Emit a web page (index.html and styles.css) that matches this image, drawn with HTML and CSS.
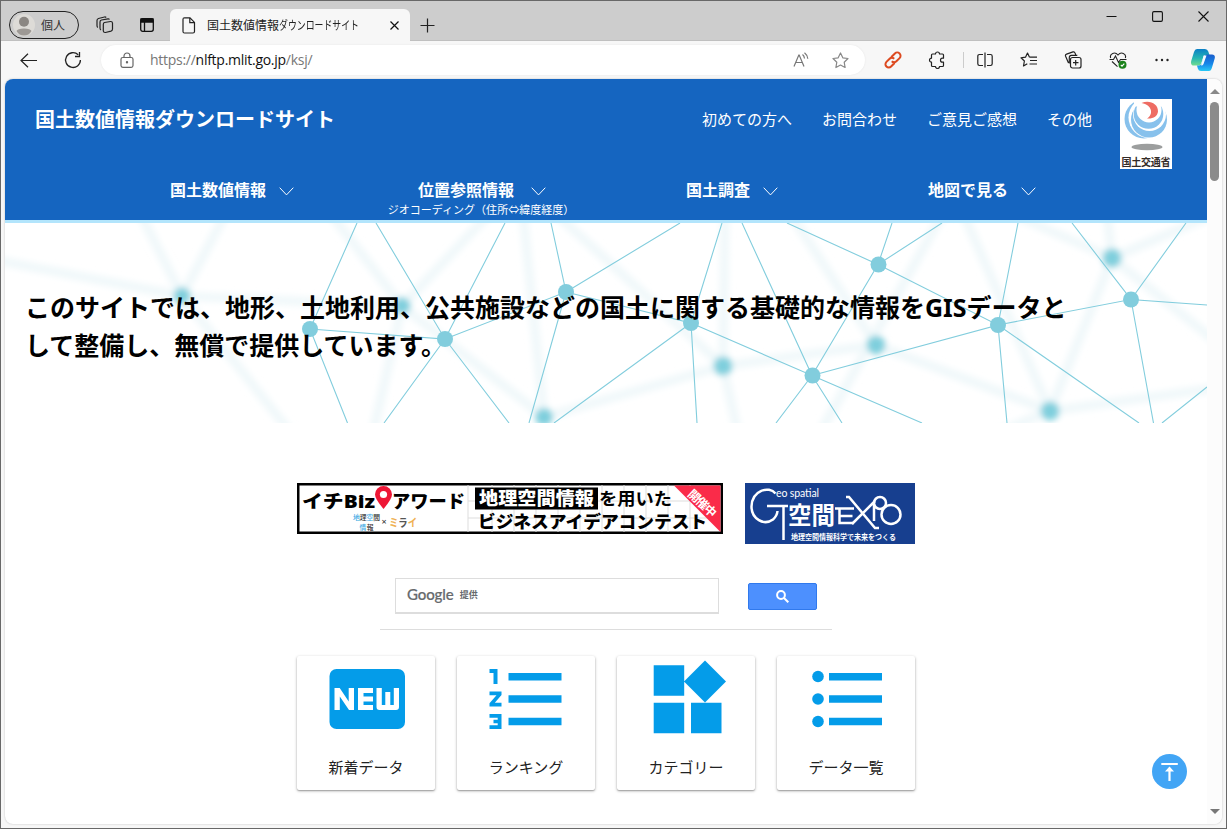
FILE: index.html
```html
<!DOCTYPE html>
<html lang="ja">
<head>
<meta charset="utf-8">
<title>国土数値情報ダウンロードサイト</title>
<link rel="stylesheet" href="styles.css">
</head>
<body>
<div class="window">
  <header class="tabbar">
    <div class="profile">
      <svg width="22" height="22" viewBox="0 0 22 22"><circle cx="11" cy="11" r="11" fill="#dddbd7"/><circle cx="11" cy="7.800" r="5" fill="#8b8783"/><path d="M3.500 17q1-2.500 7.500-2.500t7.500 2.500Q16 21.500 11 21.500T3.500 17Z" fill="#9d9995"/></svg>
      <span>個人</span>
    </div>
    <svg class="ic-work" width="18" height="18" viewBox="0 0 18 18" fill="none" stroke="#222" stroke-width="1.2"><path d="M8.500 6.500 14.500 5.500Q16.300 5.300 16.500 7V13Q16.500 14.800 15 15.200L9.500 16.500Q7.500 16.700 7.300 15V8.500Q7.300 6.800 8.500 6.500Z"/><path d="M5 14Q4 13.500 4 12V6Q4 4.300 5.500 4L12 2.800Q13 2.700 13.500 3.500"/><path d="M1.800 11.500Q1 11 1 9.500V4.500Q1 3 2.500 2.500L8.500 1Q9.500.8 10.200 1.500"/></svg>
    <svg class="ic-vtab" width="14" height="14" viewBox="0 0 14 14" fill="none" stroke="#111" stroke-width="1.3"><rect x=".7" y=".7" width="12.600" height="12.600" rx="2"/><path d="M1 1h12v3H1z" fill="#111"/><path d="M4.500 4v9"/></svg>
    <div class="tab">
      <svg width="14" height="17" viewBox="0 0 14 17" fill="none" stroke="#222" stroke-width="1.2"><path d="M2.500.8H8L12.500 5.400V14.500Q12.500 16 11 16H2.500Q1 16 1 14.500V2.300Q1 .8 2.500.8Z"/><path d="M7.800 1v4.600h4.600"/></svg>
      <span class="tab-title">国土数値情報<span class="kana">ダウンロードサイト</span></span>
      <svg class="tab-close" width="9" height="9" viewBox="0 0 9 9" stroke="#111" stroke-width="1.2"><path d="M.5.5l8 8M8.500.5l-8 8"/></svg>
    </div>
    <svg class="ic-plus" width="15" height="15" viewBox="0 0 15 15" stroke="#222" stroke-width="1.2"><path d="M7.500.5v14M.5 7.500h14"/></svg>
    <div class="winctl">
      <svg width="11" height="11" viewBox="0 0 11 11" stroke="#111"><path d="M.5 5.500h10"/></svg>
      <svg width="11" height="11" viewBox="0 0 11 11" fill="none" stroke="#111" stroke-width="1.100"><rect x=".6" y=".6" width="9.800" height="9.800" rx="1.300"/></svg>
      <svg width="11" height="11" viewBox="0 0 11 11" stroke="#111" stroke-width="1.100"><path d="M.5.5l10 10M10.500.5l-10 10"/></svg>
    </div>
  </header>

  <div class="toolbar">
    <svg class="ic-back" width="18" height="15" viewBox="0 0 18 15" fill="none" stroke="#222" stroke-width="1.2"><path d="M1 7.500h16M8 .7 1 7.500l7 6.800"/></svg>
    <svg class="ic-reload" width="18" height="18" viewBox="0 0 18 18" fill="none" stroke="#222" stroke-width="1.300"><path d="M16.400 9A7.400 7.400 0 1 1 14.200 3.800M15.500 1v4.500H11"/></svg>
    <div class="address">
      <svg width="14" height="16" viewBox="0 0 14 16" fill="none" stroke="#666" stroke-width="1.200"><rect x="1" y="5.500" width="12" height="9.800" rx="1.800"/><path d="M4 5.500V4a3 3 0 0 1 6 0v1.500"/><circle cx="7" cy="10.300" r=".6" fill="#555"/></svg>
      <span class="url">https://<b>nlftp.mlit.go.jp</b>/ksj/</span>
      <svg class="ic-read" width="16" height="16" viewBox="0 0 16 16" fill="none" stroke="#777" stroke-width="1.200"><path d="M1 14.500 5.800 3h.4L11 14.500M2.700 10.500h6.600M9.500 2.500q1.700 1.200 2 4M11.500.8q2.900 2.200 3.300 6"/></svg>
      <svg class="ic-star" width="17" height="17" viewBox="0 0 17 17" fill="none" stroke="#888" stroke-width="1.200" stroke-linejoin="round"><path d="m8.500 1 2.300 4.800 5.200.7-3.800 3.700.9 5.300-4.600-2.500-4.600 2.500.9-5.300L1 6.500l5.200-.7Z"/></svg>
    </div>
    <div class="tools">
      <svg width="18" height="18" viewBox="0 0 18 18" fill="none" stroke="#dd4a20" stroke-width="2"><g transform="rotate(-45 9 9)"><path d="M8 12.300H3A3.300 3.300 0 0 1 3 5.700H7.500A3.300 3.300 0 0 1 10.700 9M10 5.700H15A3.300 3.300 0 0 1 15 12.300H10.500A3.300 3.300 0 0 1 7.300 9"/></g></svg>
      <svg width="18" height="18" viewBox="0 0 18 18" fill="none" stroke="#222" stroke-width="1.200" stroke-linejoin="round"><path d="M4.500 3h3a2 2 0 0 1 4 0h3q1 0 1 1v3.200h-1a2 2 0 0 0 0 4h1V14.500q0 1-1 1h-3a2 2 0 0 1-4 0h-3q-1 0-1-1v-3.300a2 2 0 0 1 0-4V4q0-1 1-1Z"/></svg>
      <i class="sep"></i>
      <svg width="18" height="18" viewBox="0 0 18 18" fill="none" stroke="#222" stroke-width="1.200"><path d="M7 3.500H3.500q-1.700 0-1.700 1.700v7.600q0 1.700 1.700 1.700H7M11 3.500h3.500q1.700 0 1.700 1.700v7.600q0 1.700-1.700 1.700H11M9 1.500v15"/></svg>
      <svg width="18" height="18" viewBox="0 0 18 18" fill="none" stroke="#222" stroke-width="1.200" stroke-linejoin="round"><path d="M9.500 6.200 7.500 2 5.500 6.200 1 6.800 4.400 10l-.9 5 3.800-2.200M9.500 6.200H17M10 9.500h7M9.500 13H17"/></svg>
      <svg width="18" height="18" viewBox="0 0 18 18" fill="none" stroke="#222" stroke-width="1.200"><rect x="6.500" y="6.500" width="10.500" height="10.500" rx="2"/><path d="M11.700 9v5.500M9 11.700h5.500M4.500 12 1.600 5.300Q1 3.700 2.600 3.100L9 .9q1.500-.5 2 1l.8 2.200M5.300 12.500V6.500q0-2.200 2-2.200h6"/></svg>
      <svg width="18" height="18" viewBox="0 0 18 18" fill="none" stroke="#222" stroke-width="1.100"><path d="M1.700 7C.2 2.500 6 .2 9 4c3-3.800 8.800-1.500 7.300 3M3 10.500 8.500 15.700M.5 8.500h4L6.500 5l3 6.500 2-3h6"/><circle cx="13.500" cy="13.800" r="4" fill="#1a821a" stroke="none"/><path d="m11.800 13.800 1.200 1.300 2.300-2.500" stroke="#fff"/></svg>
      <svg width="18" height="18" viewBox="0 0 18 18" fill="#222"><circle cx="3.500" cy="9" r="1.200"/><circle cx="9" cy="9" r="1.200"/><circle cx="14.500" cy="9" r="1.200"/></svg>
      <svg class="copilot" width="24" height="22" viewBox="0 0 24 22"><defs><linearGradient id="c1" x1="0" y1="0" x2="0" y2="1"><stop stop-color="#0b7fc6"/><stop offset=".55" stop-color="#24b5b3"/><stop offset="1" stop-color="#71dc90"/></linearGradient><linearGradient id="c2" x1="0" y1="0" x2="0" y2="1"><stop stop-color="#1b5ecb"/><stop offset=".55" stop-color="#1685e8"/><stop offset="1" stop-color="#27c8f5"/></linearGradient></defs><path d="M6 0h8q2.500 0 3.300 2.500L18.500 6H15q-2 0-2.600 2l-2 6q-.7 2.500-3 2.500H3Q-.8 16.500.2 12L3 3Q3.800 0 6 0Z" fill="url(#c1)"/><path d="M18 22h-8Q7.500 22 6.800 19.500L6 16.500h2q2 0 2.600-2l2.200-6.500q.8-2.500 3-2.500H21q3.600 0 2.700 4L21 18.500Q20 22 18 22Z" fill="url(#c2)"/><path d="M12.600 6.500H15.500L12.500 15q-.6 1.500-2.500 1.500Z" fill="#f4fbff"/></svg>
    </div>
  </div>

  <div class="viewport">
    <main class="page">
      <div class="site-head">
        <div class="head-top">
          <h1>国土数値情報ダウンロードサイト</h1>
          <nav class="links"><a>初めての方へ</a><a>お問合わせ</a><a>ご意見ご感想</a><a>その他</a></nav>
          <svg class="mlit" width="52" height="70" viewBox="0 0 52 70">
            <rect width="52" height="70" fill="#fff"/>
            <circle cx="24" cy="20" r="19.500" fill="#87c1ec"/>
            <circle cx="29" cy="18.500" r="20.500" fill="#fff"/>
            <circle cx="29" cy="20.500" r="18" fill="#87c1ec"/>
            <circle cx="29.500" cy="15.500" r="16.500" fill="#fff"/>
            <circle cx="28.500" cy="15" r="14.800" fill="#87c1ec"/>
            <circle cx="29" cy="11" r="12.500" fill="#fff"/>
            <path d="M14 0H52V7.500H14Z" fill="#fff"/>
            <path d="M21.500 4C29 .5 38.500 4.500 38 12.500 37.500 17.500 33 20 27 19.500 34 15.500 32 5.500 21.500 4Z" fill="#ee6c63"/>
            <ellipse cx="27" cy="48" rx="15.500" ry="3.200" fill="#9c9e9e"/>
            <text x="1.500" y="67" textLength="49" font-size="10" font-weight="700" fill="#332b28">国土交通省</text>
          </svg>
        </div>
        <nav class="mainnav">
          <div class="item"><a>国土数値情報</a><svg width="15" height="9" viewBox="0 0 15 9"><path d="M.7.7 7.500 7.900 14.300.7"/></svg></div>
          <div class="item wide"><a>位置参照情報</a><svg width="15" height="9" viewBox="0 0 15 9"><path d="M.7.7 7.500 7.900 14.300.7"/></svg><small>ジオコーディング（住所⇔緯度経度）</small></div>
          <div class="item"><a>国土調査</a><svg width="15" height="9" viewBox="0 0 15 9"><path d="M.7.7 7.500 7.900 14.300.7"/></svg></div>
          <div class="item"><a>地図で見る</a><svg width="15" height="9" viewBox="0 0 15 9"><path d="M.7.7 7.500 7.900 14.300.7"/></svg></div>
        </nav>
      </div>

      <section class="hero">
        <svg class="network" width="1202" height="200" viewBox="5 223 1202 200">
          <defs><filter id="soft" x="-20%" y="-20%" width="140%" height="140%"><feGaussianBlur stdDeviation="3.300"/></filter></defs>
          <g filter="url(#soft)">
            <path fill="none" stroke="#f0f8fa" stroke-width="9" d="M-5 260 182 296 140 213M182 296 226 213M182 296 402 306M182 296 291 433M330 213 402 306 490 213M402 306 373 433M402 306 544 417 523 213M544 417 723 366 555 213M723 366 725 213M723 366 876 345 790 213M723 366 738 433M943 213 820 433M876 345 1050 411 963 213M1050 411 1112 258 1010 213M1112 258 1107 213M1112 258 1217 213M1112 258 1220 345M1050 411 1217 388M1050 411 980 440"/>
            <g fill="#7fcfdd"><circle cx="182" cy="296" r="8.500"/><circle cx="402" cy="306" r="8.500"/><circle cx="544" cy="417" r="9"/><circle cx="723" cy="366" r="9.500"/><circle cx="876" cy="345" r="9.500"/><circle cx="1112" cy="258" r="9.500"/><circle cx="1050" cy="411" r="9.500"/></g>
          </g>
          <path fill="none" stroke="#82cddd" stroke-width="1.100" d="M357 223 310 329 347.500 423M310 329 445 339 376 223M505 223 445 339 384 423M445 339 509 423M445 339 566 292 551 223M566 292 680 223M566 292 529 423M566 292 691 323 722 223M691 323 554 423M691 323 697 423M691 323 812 375.500 742 223M812 375.500 776 423M812 375.500 842 423M812 375.500 922 423M812 375.500 878 264.500 787 223M892 223 878 264.500 942 223M878 264.500 998 325 812 375.500M1018 223 998 325 1007 423M998 325 1139 423M998 325 1131 299.500 1072 223M1186 223 1131 299.500 1207 305M1131 299.500 1153.500 423M1162 423 1207 387"/>
          <g fill="#82cddd"><circle cx="310" cy="329" r="8"/><circle cx="445" cy="339" r="8"/><circle cx="566" cy="292" r="8"/><circle cx="691" cy="323" r="8"/><circle cx="812.500" cy="375.500" r="8"/><circle cx="878.500" cy="264.500" r="8"/><circle cx="998" cy="325" r="8"/><circle cx="1131" cy="299.500" r="8"/></g>
        </svg>
        <p>このサイトでは、地形、土地利用、公共施設などの国土に関する基礎的な情報をGISデータと<br>して整備し、無償で提供しています。</p>
      </section>

      <section class="content">
        <div class="banners">
          <svg width="426" height="51" viewBox="0 0 426 51" font-weight="900">
            <rect x="1.250" y="1.250" width="423.500" height="48.500" fill="#fff" stroke="#000" stroke-width="2.500"/>
            <path d="M171 2v47M195 2v47M217 2v47M239 2v47M261 2v47M283 2v47M305 2v47M327 2v47M349 2v47M371 2v47M393 2v47M171 18h250M171 35h250" stroke="#ddd" fill="none"/>
            <text x="5" y="24.500" font-size="18" textLength="73" lengthAdjust="spacingAndGlyphs">イチBiz</text>
            <path d="M86.500 26Q78 16 78 11.500a8.500 8.500 0 0 1 17 0Q95 16 86.500 26Z" fill="#ee1736"/><circle cx="86.500" cy="11.500" r="3.600" fill="#fff"/>
            <text x="95" y="24.500" font-size="18" textLength="73" lengthAdjust="spacingAndGlyphs">アワード</text>
            <g font-size="6.800" font-weight="500" fill="#333"><text x="56" y="37.300" textLength="27"><tspan fill="#39a7e3">地</tspan>理<tspan fill="#39a7e3">空</tspan>間</text><text x="62.500" y="46.500" textLength="14"><tspan fill="#39a7e3">情</tspan>報</text><text x="84.500" y="42" font-size="9">×</text></g>
            <text x="92" y="43.500" font-size="11" font-weight="700" textLength="28" lengthAdjust="spacingAndGlyphs" fill="#efb052">ミ<tspan fill="#555">ラ</tspan>イ</text>
            <rect x="178" y="4.500" width="123" height="22" fill="#000"/>
            <text x="182" y="22" font-size="18" textLength="115" fill="#fff" lengthAdjust="spacingAndGlyphs">地理空間情報</text>
            <text x="302" y="21.500" font-size="17" textLength="73" lengthAdjust="spacingAndGlyphs" font-weight="700">を用いた</text>
            <text x="181" y="44.500" font-size="17" textLength="229" lengthAdjust="spacingAndGlyphs">ビジネスアイデアコンテスト</text>
            <path d="M377 2.500h46.500V49Z" fill="#fa2b49"/>
            <text transform="translate(390 12) rotate(43)" font-size="12" font-weight="700" textLength="34" fill="#fff">開催中</text>
          </svg>
          <svg width="170" height="61" viewBox="0 0 170 61" fill="none" stroke="#fff" stroke-width="2.500">
            <rect width="170" height="61" fill="#173f8f" stroke="none"/>
            <path d="M30.500 10.500C24 2.500 7 7 6.500 23.500 6.500 36 19 43 28 36.500q4-3.500 4.500-8.500M22 23h21M38.500 23v34"/>
            <g fill="#fff" stroke="none"><text x="31" y="14" font-family="Lato, sans-serif" font-size="10.500" textLength="43">eo spatial</text><text x="43" y="41" font-size="24" font-weight="700" textLength="47" lengthAdjust="spacingAndGlyphs">空間</text><text x="46" y="57" font-size="7.500" font-weight="700" textLength="105" lengthAdjust="spacingAndGlyphs">地理空間情報科学で未来をつくる</text></g>
            <path d="M90 25.500h19M94.500 33h13M94.500 25.500v14.500h14"/>
            <path d="M101 14h3L130 45h4M107 41 130 18M129 21V38"/><circle cx="135" cy="20" r="6"/><circle cx="146" cy="31.500" r="9.500"/>
          </svg>
        </div>
        <div class="search">
          <div class="field"><span class="google">Google</span><span class="by">提供</span></div>
          <button class="go" aria-label="検索"><svg width="13" height="13" viewBox="0 0 13 13" fill="none" stroke="#fff" stroke-width="2"><circle cx="5" cy="5" r="3.900"/><path d="m8 8 4.300 4.300"/></svg></button>
        </div>
        <div class="cards">
          <div class="card"><svg width="138" height="94" viewBox="0 0 138 94"><rect x="32.500" y="13" width="75.500" height="60" rx="7" fill="#049ce9"/><path fill="#fff" d="M37.500 54V32h5.200l9 13.500V32H57v22h-5l-9.200-13.500V54ZM61 32h15v5H66.500v3.500H76v5H66.500V49H76v5H61ZM79.500 32h5.300v17h3.500V36h5v13h3.500V32H102v19q0 3-3 3H82.500q-3 0-3-3Z"/></svg><span>新着データ</span></div>
          <div class="card"><svg width="138" height="94" viewBox="0 0 138 94" fill="#049ce9"><path d="M51.500 17H104.500v7.500H51.500zM51.500 39.300H104.500v7.500H51.500zM51.500 61.700H104.500v7.500H51.500z"/><path d="M32.500 13H40.500v15H36.500V17H32.500ZM32.500 35.500H44.500V39L37.800 46.800H44.500V50.500H32.500V47.300L39.500 39.300H32.500ZM32.500 58H44.500V73H32.500V69.300H40.700V67.300H36.500V63.700H40.700V61.700H32.500Z"/></svg><span>ランキング</span></div>
          <div class="card"><svg width="138" height="94" viewBox="0 0 138 94" fill="#049ce9"><path d="M36.700 9.300h30.500v30.500H36.700zM36.700 46.700h30.500v30.500H36.700zM74 46.700h30.500v30.500H74zM88 4.500 109 25.500 88 46.500 67 25.500Z"/></svg><span>カテゴリー</span></div>
          <div class="card"><svg width="138" height="94" viewBox="0 0 138 94" fill="#049ce9"><circle cx="41" cy="20.500" r="5.800"/><circle cx="41" cy="43" r="5.800"/><circle cx="41" cy="65.500" r="5.800"/><path d="M52 17h53v7.500H52zM52 39.300h53v7.500H52zM52 61.700h53v7.500H52z"/></svg><span>データ一覧</span></div>
        </div>
      </section>
    </main>
    <div class="scrollbar"><i class="up"></i><i class="thumb"></i><i class="down"></i></div>
    <svg class="totop" width="35" height="35" viewBox="0 0 35 35"><circle cx="17.500" cy="17.500" r="17.500" fill="#42a5f5"/><path d="M9.300 10h16.500M17.500 27V16" stroke="#fff" stroke-width="2.200"/><path d="m17.500 12.500 4.500 5h-9z" fill="#fff"/></svg>
  </div>
</div>
</body>
</html>
```

FILE: styles.css
```css
* { box-sizing: border-box; }
body { margin: 0; font-family: "Noto Sans", "Noto Sans CJK JP", sans-serif; }
svg { display: block; flex: none; }
.window { width: 1227px; height: 829px; border: 1px solid #686868; background: #f7f7f7; overflow: hidden; }

/* browser chrome */
.tabbar { height: 40px; background: #cdcdcd; display: flex; align-items: flex-start; border-bottom: 1px solid #c0c0c0; }
.profile { margin: 10px 0 0 8px; width: 70px; height: 28px; border: 1px solid #222; border-radius: 14px; display: flex; align-items: center; gap: 6px; padding-left: 3px; font-size: 12px; color: #333; }
.ic-work { margin: 15px 0 0 17px; }
.ic-vtab { margin: 17px 0 0 26px; }
.tab { margin: 8px 0 0 16px; width: 240px; height: 32px; background: #f7f7f7; border-radius: 6px 6px 0 0; display: flex; align-items: center; padding: 0 11px 0 12px; }
.tab-title { margin-left: 11px; width: 151px; font-size: 12px; color: #222; white-space: nowrap; }
.kana { display: inline-block; width: 79px; transform: scaleX(.74); transform-origin: left; }
.tab-close { margin-left: auto; }
.ic-plus { margin: 17px 0 0 10px; }
.winctl { margin: 10px 17px 0 auto; display: flex; gap: 35px; }
.toolbar { height: 38px; display: flex; align-items: center; }
.ic-back { margin-left: 19px; }
.ic-reload { margin-left: 26px; }
.address { margin-left: 19px; width: 764px; height: 30px; border-radius: 15px; background: #fff; display: flex; align-items: center; padding: 0 16px 0 19px; box-shadow: 0 0 2px #e4e4e4; }
.url { margin-left: 16px; font: 14px/20px "Open Sans", sans-serif; letter-spacing: -.27px; color: #777; }
.url b { font-weight: 400; color: #111; }
.ic-read { margin-left: auto; }
.ic-star { margin-left: 23px; }
.tools { flex: 1; display: flex; align-items: center; padding-left: 19px; gap: 26.3px; }
.sep { width: 1px; height: 16px; background: #ccc; margin: 0 -14px 0 -10px; }
.copilot { margin-left: -6px; }

/* page viewport */
.viewport { position: relative; margin-left: 4px; width: 1217px; height: 745px; background: #fff; border-radius: 8px; overflow: hidden; display: flex; box-shadow: 0 0 2px #bbb; }
.page { width: 1202px; }
.scrollbar { width: 15px; background: #fcfcfc; display: flex; flex-direction: column; align-items: center; padding: 10px 0 10px; }
.up, .down { border: 5px solid transparent; width: 0; }
.up { border-top: 0; border-bottom: 5px solid #888; }
.down { border-bottom: 0; border-top: 5px solid #777; margin-top: auto; }
.thumb { margin-top: 8px; width: 9px; height: 79px; border-radius: 5px; background: #8b8b8b; }
.totop { position: absolute; left: 1147px; top: 675px; }

.site-head { height: 144px; background: #1565c0; border-bottom: 3px solid #b3e5fc; color: #fff; }
.head-top { height: 100px; display: flex; align-items: flex-start; padding: 20px 35px 0 30px; }
h1 { margin: 6px 0 0; font-size: 20px; line-height: 30px; font-weight: 700; }
.links { margin: 6px 28px 0 auto; display: flex; gap: 30px; font-size: 15px; line-height: 28px; }
.mainnav { display: grid; grid-template-columns: repeat(4, 250px); padding-left: 102px; }
.item { display: flex; flex-wrap: wrap; justify-content: center; align-items: center; align-content: flex-start; column-gap: 13px; font-size: 16px; line-height: 22px; font-weight: 700; }
.item svg { margin-top: 3px; fill: none; stroke: #fff; stroke-width: 1; }
.wide { column-gap: 17px; }
.item small { width: 100%; text-align: center; margin: 0 2px 0 0; font-size: 11px; line-height: 17px; font-weight: 400; letter-spacing: .03px; }

.hero { height: 200px; position: relative; overflow: hidden; padding: 65px 20px; }
.network { position: absolute; left: 0; top: 0; }
.hero p { position: relative; margin: 0; font-size: 25px; line-height: 38px; font-weight: 700; color: #000; white-space: nowrap; }

.content { padding-left: 292px; }
.banners { padding-top: 60px; display: flex; gap: 22px; }
.search { margin: 34px 0 0 83px; width: 452px; height: 52px; border-bottom: 1px solid #ddd; display: flex; align-items: flex-start; padding-left: 15px; }
.field { width: 324px; height: 36px; border: 1px solid #ddd; border-bottom-width: 2px; display: flex; align-items: center; padding: 0 0 3px 11px; color: #666a6d; }
.google { font: 500 15px "Lato", sans-serif; letter-spacing: -.1px; -webkit-text-stroke: .2px #666a6d; }
.by { margin-left: 6px; font-size: 9px; font-weight: 700; }
.go { margin: 5px 0 0 29px; width: 69px; height: 27px; border: 1px solid #3079ed; border-radius: 2px; background: #4d90fe; display: flex; align-items: center; justify-content: center; padding: 0; }
.cards { margin-top: 26px; display: grid; grid-template-columns: repeat(4, 138px); gap: 22px; }
.card { height: 134px; border-radius: 2px; background: #fff; box-shadow: 0 1px 3px rgba(0,0,0,.32), 0 1px 1px rgba(0,0,0,.16); text-align: center; font-size: 15px; color: #222; }
.card span { display: block; line-height: 34px; }
```
